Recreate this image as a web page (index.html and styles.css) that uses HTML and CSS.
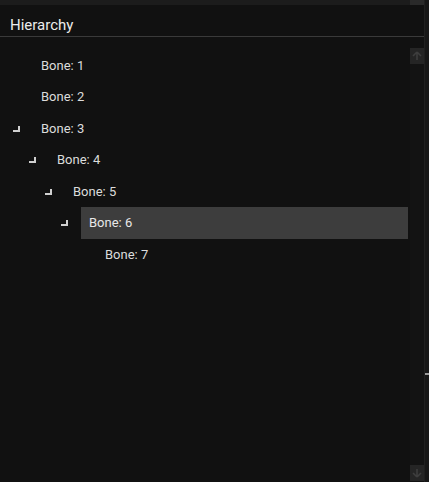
FILE: index.html
```html
<!DOCTYPE html>
<html>
<head>
<meta charset="utf-8">
<link rel="stylesheet" href="styles.css">
</head>
<body>
<div class="app">
  <div class="main">
    <div class="topbar"><div class="topfill"></div><div class="topthumb"></div></div>
    <div class="header">Hierarchy</div>
    <div class="body">
      <div class="list">
        <div class="row d0"><div class="twist"></div><div class="label">Bone: 1</div></div>
        <div class="row d0"><div class="twist"></div><div class="label">Bone: 2</div></div>
        <div class="row d0"><div class="twist"><span class="mark"></span></div><div class="label">Bone: 3</div></div>
        <div class="row d1"><div class="twist"><span class="mark"></span></div><div class="label">Bone: 4</div></div>
        <div class="row d2"><div class="twist"><span class="mark"></span></div><div class="label">Bone: 5</div></div>
        <div class="row d3"><div class="twist"><span class="mark"></span></div><div class="label selected">Bone: 6</div></div>
        <div class="row d4"><div class="twist"></div><div class="label">Bone: 7</div></div>
      </div>
      <div class="scroll">
        <div class="btn"><svg width="14" height="16" viewBox="0 0 14 16"><path d="M7 4 L3 8 M7 4 L11 8 M7 4 V12" stroke="#3e3e3e" stroke-width="1.6" fill="none"/></svg></div>
        <div class="track"></div>
        <div class="btn"><svg width="14" height="16" viewBox="0 0 14 16"><path d="M7 12 L3 8 M7 12 L11 8 M7 12 V4" stroke="#3e3e3e" stroke-width="1.6" fill="none"/></svg></div>
      </div>
    </div>
  </div>
  <div class="edge"><span class="tick"></span></div>
</div>
</body>
</html>
```
FILE: styles.css
```css
html, body {
  margin: 0;
  padding: 0;
  background: #111111;
  overflow: hidden;
}
.app {
  display: flex;
  width: 429px;
  height: 482px;
  font-family: Roboto, "Liberation Sans", sans-serif;
  color: #dedede;
}
.main {
  flex: 1;
  display: flex;
  flex-direction: column;
  min-width: 0;
}
.topbar {
  height: 5px;
  display: flex;
  background: #1c1c1c;
}
.topfill { flex: 1; }
.topthumb {
  width: 14px;
  background: #2a2a2a;
}
.header {
  padding: 11px 0 2px 10px;
  font-size: 15px;
  line-height: 18px;
  color: #ececec;
  border-bottom: 1px solid #3a3a3a;
}
.body {
  flex: 1;
  display: flex;
  min-height: 0;
}
.list {
  flex: 1;
  padding: 12.5px 2px 0 0;
}
.row {
  display: flex;
  height: 31.5px;
  align-items: stretch;
}
.d1 { padding-left: 16px; }
.d2 { padding-left: 32px; }
.d3 { padding-left: 48px; }
.d4 { padding-left: 64px; }
.twist {
  width: 33px;
  flex: none;
  display: flex;
  align-items: center;
  padding-left: 13px;
  box-sizing: border-box;
}
.mark {
  display: block;
  width: 5px;
  height: 4px;
  border-right: 2px solid #d0d0d0;
  border-bottom: 2px solid #d0d0d0;
  margin-top: 1px;
}
.label {
  flex: 1;
  display: flex;
  align-items: center;
  padding-left: 8px;
  font-size: 13px;
  color: #dcdcdc;
}
.label.selected {
  background: #3d3d3d;
  color: #e8e8e8;
}
.scroll {
  width: 14px;
  margin: 11px 0 1px 0;
  display: flex;
  flex-direction: column;
  background: #131313;
}
.btn {
  height: 16px;
  background: #252525;
}
.btn svg { display: block; }
.track { flex: 1; }
.edge {
  width: 5px;
  position: relative;
  background: #171717;
  border-left: 1px solid #202020;
  box-sizing: border-box;
}
.tick {
  position: absolute;
  left: 0;
  top: 373px;
  width: 4px;
  height: 2px;
  background: #9a9a9a;
}
```
